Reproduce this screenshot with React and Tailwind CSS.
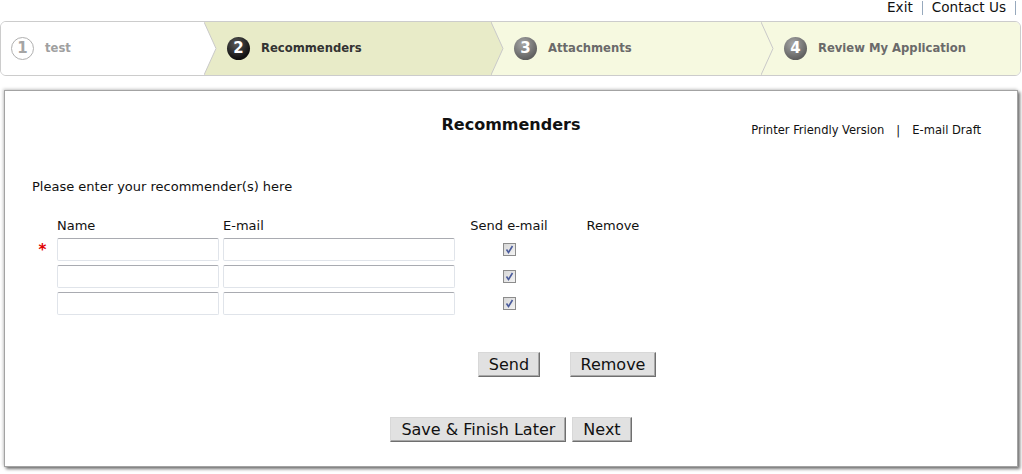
import React from 'react';

const steps = [
    { n: 1, label: 'test', width: 'w-[204px]', bg: 'bg-white', fill: '#ffffff', state: 'done' },
    { n: 2, label: 'Recommenders', width: 'w-[287px]', bg: 'bg-[#e8ebc8]', fill: '#e8ebc8', state: 'current' },
    { n: 3, label: 'Attachments', width: 'w-[270px]', bg: 'bg-[#f6f9e0]', fill: '#f6f9e0', state: 'todo' },
    { n: 4, label: 'Review My Application', width: 'flex-1', bg: 'bg-[#f6f9e0]', fill: '#f6f9e0', state: 'todo', last: true },
];

const StepCircle = ({ n, state }) => {
    if (state === 'done') {
        return (
            <span className="flex h-[23px] w-[23px] shrink-0 items-center justify-center rounded-full border-[1.5px] border-[#b0b0b0] bg-white text-[15px] font-bold text-[#a5a5a5]">
                {n}
            </span>
        );
    }
    const tone = state === 'current'
        ? 'bg-[radial-gradient(circle_at_40%_30%,#5a5a5a,#111111_70%)]'
        : 'bg-[radial-gradient(circle_at_40%_30%,#a8a8a8,#5e5e5e_75%)]';
    return (
        <span className={`flex h-[23px] w-[23px] shrink-0 items-center justify-center rounded-full text-[15px] font-bold text-white ${tone}`}>
            {n}
        </span>
    );
};

const Stepper = () => (
    <div className="flex h-[55px] w-[1021px] overflow-hidden rounded-[6px] border border-[#cccccc] font-['DejaVu_Sans',sans-serif]">
        {steps.map((s) => (
            <div key={s.n} className={`relative flex h-full items-center gap-[11px] ${s.width} ${s.bg} ${s.n === 1 ? 'pl-[10px]' : 'pl-[22px]'}`}>
                <StepCircle n={s.n} state={s.state} />
                <span className={`text-[11.6px] font-bold ${s.state === 'current' ? 'text-[#333333]' : s.state === 'done' ? 'text-[#a0a0a0]' : 'text-[#6a6a6a]'}`}>
                    {s.label}
                </span>
                {!s.last && (
                    <svg className="absolute -right-[12px] top-0 z-10" width="13" height="53" viewBox="0 0 13 53">
                        <polygon points="0,0 12,26.5 0,53" fill={s.fill} />
                        <polyline points="0,0 12,26.5 0,53" fill="none" stroke="#c9c9c9" strokeWidth="1" />
                    </svg>
                )}
            </div>
        ))}
    </div>
);

const CheckMark = () => (
    <svg width="13" height="13" viewBox="0 0 13 13">
        <defs>
            <linearGradient id="cb" x1="0" y1="0" x2="1" y2="1">
                <stop offset="0" stopColor="#d6d6d6" />
                <stop offset="1" stopColor="#f4f4f4" />
            </linearGradient>
        </defs>
        <rect x="0.5" y="0.5" width="12" height="12" fill="url(#cb)" stroke="#8c8c8c" />
        <path d="M3.5 6.5 L5.5 9.5 L9.5 3" fill="none" stroke="#4a5b9c" strokeWidth="1.6" />
    </svg>
);

const TextBox = () => (
    <input
        type="text"
        className="h-[23px] w-full rounded-[2px] border border-[#e0e4ea] border-t-[#a9abb1] bg-white px-1 text-[13px] outline-none"
    />
);

const Btn = ({ children }) => (
    <button className="h-[25px] border border-t-[#d8d8d8] border-l-[#d8d8d8] border-r-[#6f6f6f] border-b-[#6f6f6f] bg-[#e1e1e1] px-[10px] text-[16px] leading-[20px] text-[#111111] shadow-[inset_-1px_-1px_0_#a8a8a8]">
        {children}
    </button>
);

const App = () => {
    return (
        <div className="h-[474px] w-[1022px] bg-white font-['DejaVu_Sans',sans-serif] text-[#111111]">
            {/* top links */}
            <div className="flex h-[21px] items-start justify-end gap-[9px] pr-[6px] text-[13.6px] leading-[15px]">
                <a href="#" className="text-[#111111]">Exit</a>
                <span className="mt-[1px] h-[14px] w-px bg-[#97a9bd]" />
                <a href="#" className="text-[#111111]">Contact Us</a>
                <span className="mt-[1px] h-[14px] w-px bg-[#97a9bd]" />
            </div>

            <Stepper />

            {/* main panel */}
            <div className="ml-[4px] mt-[14px] w-[1014px] border border-[#a3a3a3] bg-white pb-[24px] shadow-[2px_2px_3px_rgba(0,0,0,0.55),-1px_-1px_3px_rgba(0,0,0,0.2)]">
                <div className="grid grid-cols-[1fr_auto_1fr] pt-[24px]">
                    <div />
                    <h2 className="text-[16px] font-bold leading-[20px]">Recommenders</h2>
                    <div className="mt-[8px] flex justify-end gap-[12px] pr-[36px] font-['DejaVu_Sans_Condensed','Liberation_Sans',sans-serif] text-[12.8px] leading-[14px] text-[#111111]">
                        <a href="#">Printer Friendly Version</a>
                        <span className="text-[#111111]">|</span>
                        <a href="#">E-mail Draft</a>
                    </div>
                </div>

                <p className="mt-[42px] pl-[27px] text-[13px] leading-[16px]">Please enter your recommender(s) here</p>

                <div className="mt-[23px] grid grid-cols-[21px_162px_232px_100px_100px] gap-x-[4px] gap-y-[4px] pl-[27px] text-[13px] leading-[16px]">
                    <div />
                    <div>Name</div>
                    <div>E-mail</div>
                    <div className="text-center">Send e-mail</div>
                    <div className="text-center">Remove</div>

                    {[0, 1, 2].map((i) => (
                        <React.Fragment key={i}>
                            <div className="flex items-center justify-center text-[15px] font-bold leading-[10px] text-[#e00000]">
                                {i === 0 ? '*' : ''}
                            </div>
                            <TextBox />
                            <TextBox />
                            <div className="flex items-center justify-center"><CheckMark /></div>
                            <div />
                        </React.Fragment>
                    ))}

                    <div className="col-start-4 mt-[33px] flex justify-center"><Btn>Send</Btn></div>
                    <div className="col-start-5 mt-[33px] flex justify-center"><Btn>Remove</Btn></div>
                </div>

                <div className="mt-[40px] flex justify-center gap-[6px]">
                    <Btn>Save &amp; Finish Later</Btn>
                    <Btn>Next</Btn>
                </div>
            </div>
        </div>
    );
};

export default App;
